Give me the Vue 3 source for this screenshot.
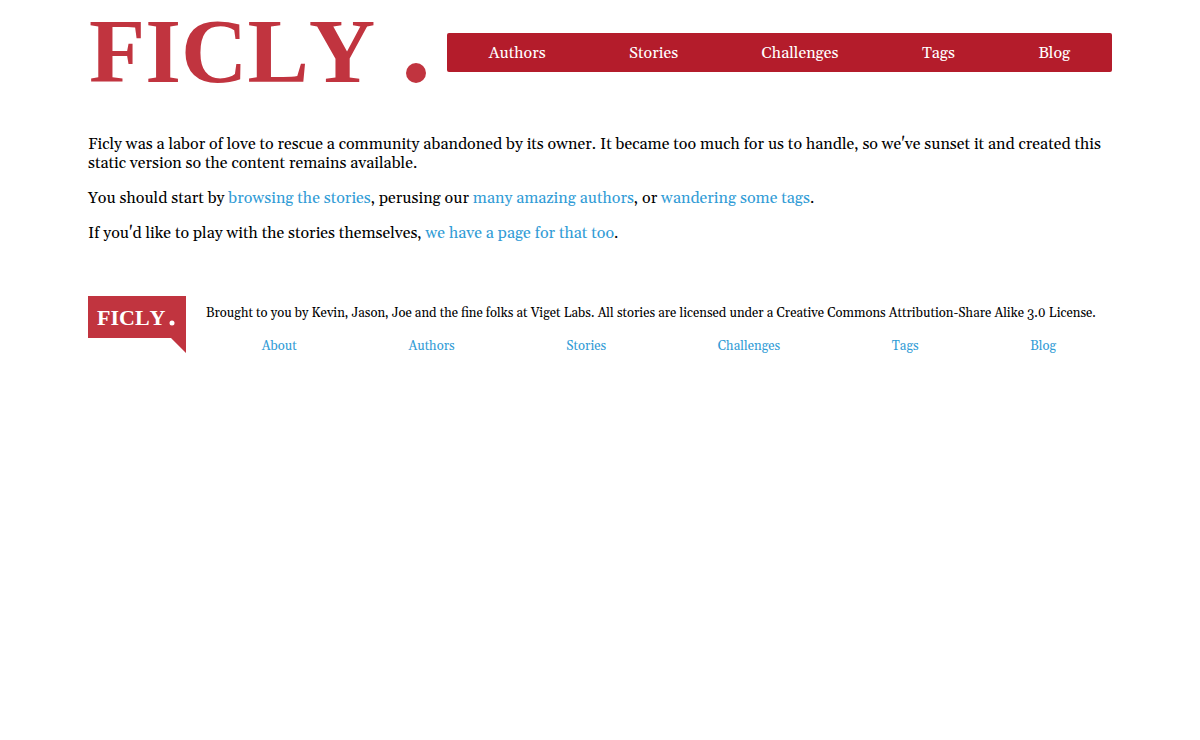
<script setup>
const sections = ['Authors', 'Stories', 'Challenges', 'Tags', 'Blog']
const footerLinks = ['About', ...sections]
</script>

<template>
  <div class="page">
    <header class="masthead">
      <a class="brand" href="#" aria-label="Ficly home">
        <svg class="wordmark" viewBox="0 -18 339 104" aria-hidden="true">
          <text class="letters" x="1" y="64">FICLY</text>
          <circle cx="328" cy="55" r="10" />
        </svg>
      </a>
      <nav class="main-nav" aria-label="Main">
        <a v-for="item in sections" :key="item" href="#">{{ item }}</a>
      </nav>
    </header>

    <main class="content">
      <p>
        Ficly was a labor of love to rescue a community abandoned by its owner. It became too much
        for us to handle, so we've sunset it and created this static version so the content remains
        available.
      </p>
      <p>
        You should start by <a href="#">browsing the stories</a>, perusing our
        <a href="#">many amazing authors</a>, or <a href="#">wandering some tags</a>.
      </p>
      <p>
        If you'd like to play with the stories themselves,
        <a href="#">we have a page for that too</a>.
      </p>
    </main>

    <footer class="footer">
      <svg class="badge" viewBox="0 0 98 57" role="img" aria-label="Ficly">
        <path d="M0 0H98V57L83 42H0Z" />
        <text class="badge-letters" x="9" y="29">FICLY</text>
        <circle cx="84" cy="27" r="2.5" />
      </svg>
      <div class="footer-body">
        <p>
          Brought to you by Kevin, Jason, Joe and the fine folks at Viget Labs. All stories are
          licensed under a Creative Commons Attribution-Share Alike 3.0 License.
        </p>
        <nav class="footer-nav" aria-label="Footer">
          <a v-for="item in footerLinks" :key="item" href="#">{{ item }}</a>
        </nav>
      </div>
    </footer>
  </div>
</template>

<style>
body {
  background: #fff;
}
</style>

<style scoped>
.page {
  max-width: 1024px;
  margin: 0 auto;
  color: #000;
  font: 16px/19px Georgia, Gelasio, "Liberation Serif", serif;
}

a {
  color: #329cd6;
  text-decoration: none;
}

.masthead {
  display: flex;
  align-items: center;
  gap: 20px;
}

.brand {
  flex: none;
}

.wordmark {
  display: block;
  overflow: visible;
  width: 339px;
  height: 104px;
  fill: #c1343f;
}

.letters {
  font: bold 92px "Liberation Serif", serif;
  font-kerning: none;
}

.main-nav {
  display: flex;
  flex: 1;
  justify-content: space-around;
  padding: 11px 0 9px;
  border-radius: 2px;
  background: #b41c2b;
}

.main-nav a {
  color: #fff;
}

.content {
  padding-top: 31px;
}

.content p {
  margin: 0 0 16px;
}

.footer {
  display: flex;
  gap: 20px;
  margin-top: 53px;
}

.badge {
  flex: none;
  width: 98px;
  height: 57px;
  fill: #c1343f;
}

.badge text,
.badge circle {
  fill: #fff;
}

.badge-letters {
  font: bold 22px "Liberation Serif", serif;
  font-kerning: none;
}

.footer-body {
  flex: 1;
  padding-top: 9px;
  font-size: 13px;
  line-height: 17px;
}

.footer-body p {
  margin: 0 0 16px;
}

.footer-nav {
  display: flex;
  justify-content: space-around;
}
</style>
